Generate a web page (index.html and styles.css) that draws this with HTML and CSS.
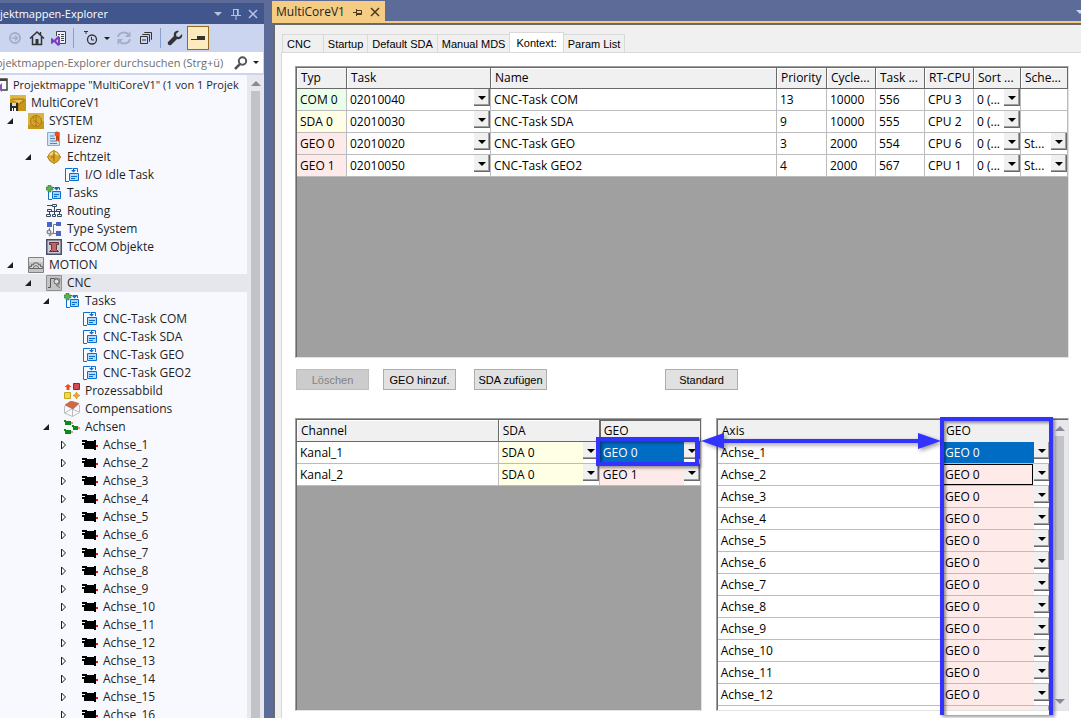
FILE: index.html
```html
<!DOCTYPE html>
<html lang="de">
<head>
  <meta charset="UTF-8">
  <meta name="viewport" content="width=device-width, initial-scale=1">
  <title>MultiCoreV1</title>
  <link rel="stylesheet" href="styles.css">
</head>
<body>
  <!-- icon symbols -->
  <svg class="symbols" aria-hidden="true">
    <symbol id="i-open" viewBox="0 0 8 8"><path d="M7 1v6H1z" fill="#1e1e1e"/></symbol>
    <symbol id="i-closed" viewBox="0 0 8 10"><path d="M1.500 1v8l4-4z" fill="#fff" stroke="#1e1e1e"/></symbol>
    <symbol id="i-solution" viewBox="0 0 16 16"><path d="M3 2h12v11H9" fill="#f8f9ff" stroke="#424242" stroke-width="1.500"/><path d="M3 3h12" stroke="#424242" stroke-width="2"/><path d="M1 9l3 3 6-6v9l-6-5-3 3z" fill="#8a4fc8"/></symbol>
    <symbol id="i-project" viewBox="0 0 16 16"><path d="M0 0h16v16H0z" fill="#c9961c"/><path d="M0 0h16v4H0z" fill="#dfb545"/><path d="M2 4h12v2L8 10v6" fill="none" stroke="#a87c12"/><path d="M3 5h10l-4 3z" fill="#e8c560"/><path d="M0 8h8v8H0z" fill="#2b2b2b"/><path d="M2 8h4v3H2z" fill="#d9d9d9"/><path d="M2 13h1v3H2zM4 13h2v3H4z" fill="#fff"/></symbol>
    <symbol id="i-system" viewBox="0 0 16 16"><path d="M0 0h16v16H0z" fill="#c9961c"/><path d="M0 0h16v8L0 12z" fill="#deb23c"/><circle cx="8" cy="8" r="5.500" fill="#d5a52d" stroke="#a87a14"/><path d="M8 3v10M5 8h3M8 8l3 3M6 4L5 6" stroke="#a87a14" fill="none"/></symbol>
    <symbol id="i-license" viewBox="0 0 16 16"><path d="M1.500 1.500h12v13h-12z" fill="#cfe5f7" stroke="#79afd8"/><path d="M4 5h4M4 7.500h5M4 10h7M4 12.500h7" stroke="#5b87ab"/><circle cx="11" cy="3" r="2.500" fill="#e5521c"/><path d="M10 5h3v6l-1.500-1.500L10 10z" fill="#c8441a"/></symbol>
    <symbol id="i-realtime" viewBox="0 0 16 16"><circle cx="8" cy="8" r="5.700" fill="#dba92b" stroke="#b5841a"/><path d="M7 1h2v2H7zM1 7h2v2H1zM13 7h2v2h-2zM7 13h2v2H7z" fill="#c9961c"/><path d="M4 6c2-3 6-3 8 0" stroke="#f5da87" fill="none" stroke-width="2"/><path d="M8 3v9M5 8h3" stroke="#94690d" fill="none"/></symbol>
    <symbol id="i-task" viewBox="0 0 16 16"><path d="M5 14.500H1.500v-13h7M9 1.500h4.500V5" fill="none" stroke="#0a6fd0"/><path d="M7 3h5L9.500 5.500zM9 1h1v3H9z" fill="#0a6fd0"/><path d="M5.500 6.500h9v7h-9z" fill="#b5daf9" stroke="#0a6fd0"/><path d="M7 9.500h6M7 11.500h4" stroke="#0a6fd0"/></symbol>
    <symbol id="i-tasks" viewBox="0 0 16 16"><path d="M6 14.500H2.500v-12h6M9 2.500h4.500V5" fill="none" stroke="#0a6fd0"/><path d="M8 3h5l-2.500 2.500z" fill="#0a6fd0"/><path d="M6.500 6.500h8v7h-8z" fill="#a9d3f7" stroke="#0a6fd0"/><path d="M8 9.500h5M8 11.500h3" stroke="#0a6fd0"/><path d="M2 0h3v2h2v3H5v2H2V5H0V2h2z" fill="#5fae57" stroke="#397b34" stroke-width=".6"/></symbol>
    <symbol id="i-routing" viewBox="0 0 16 16"><path d="M1 2.500h6M8.500 4v7M3 8.500h12M3.500 6v5M13.500 8v4" stroke="#35495e" fill="none"/><path d="M6.500 1.500h4v2h-4zM1.500 6.500h4v2h-4zM10.500 6.500h4v2h-4zM.500 11.500h4v2h-4zM6.500 11.500h3v2h-3zM11.500 11.500h4v2h-4z" fill="#f8f9ff" stroke="#35495e"/></symbol>
    <symbol id="i-types" viewBox="0 0 16 16"><path d="M1 1h5v5H1zM10 1h5v4h-5zM10 10h5v5h-5z" fill="#4766c4"/><path d="M10 3.500H7.500v9H10M3.500 7v3" stroke="#777" fill="none"/><circle cx="3" cy="11" r="2" fill="#ddd" stroke="#666"/><path d="M3 15l4-3" stroke="#888" stroke-width="1.500"/></symbol>
    <symbol id="i-tccom" viewBox="0 0 16 16"><path d="M.750.750h14.500v14.500H.750z" fill="#c9cbd6" stroke="#4b4f68" stroke-width="1.500"/><path d="M3.500 3.500h9v2h-2v5l2 2h-9l2-2v-5h-2z" fill="#b8686b" stroke="#6d2d32"/></symbol>
    <symbol id="i-motion" viewBox="0 0 16 16"><path d="M.500.500h15v15H.500z" fill="#c4c4c4" stroke="#808080"/><path d="M1 1h14v4H1z" fill="#dedede"/><path d="M1.500 11.500v-2h2v-2l2 .5.500-2h4l.5 2 2-.5v2h2v2zM5.500 11c0-3 5-3 5 0" fill="#d4d4d4" stroke="#666"/></symbol>
    <symbol id="i-cnc" viewBox="0 0 16 16"><path d="M.500.500h15v15H.500z" fill="#c4c4c4" stroke="#909090"/><path d="M2 12.500h2.500v-9h4v5" fill="none" stroke="#555"/><circle cx="10.500" cy="6.500" r="2.500" fill="#ddd" stroke="#666"/><path d="M9 3l5 1-1 6-3 0 4 3" stroke="#777" fill="none"/></symbol>
    <symbol id="i-image" viewBox="0 0 16 16"><path d="M4 1l3.500 3H5.500v3h-3V4H.500z" fill="#ee4a25"/><path d="M9.500.500h6v6h-6z" fill="#d34b55" stroke="#a2202c"/><path d="M.500 9.500h6v6h-6z" fill="#f0d94c" stroke="#c5a61c"/><path d="M12.500 9l1.200 2.300L16 12.500l-2.300 1.200L12.500 16l-1.200-2.300L9 12.500l2.300-1.200z" fill="#f5a51b" stroke="#ca7d0b" stroke-width=".5"/></symbol>
    <symbol id="i-comp" viewBox="0 0 16 16"><path d="M.500 5v7l8 3.500 7-4V4M8.500 8v7M.500 12l7-4 8 3" fill="none" stroke="#bcbcbc"/><path d="M1 4l6-4 8 2.500L9 8z" fill="#cd6b49" stroke="#b45535" stroke-width=".6"/></symbol>
    <symbol id="i-axes" viewBox="0 0 16 16"><path d="M0 1h2v1h5v4H1V3H0zM8 6h2v1h4v4H9V8H8zM0 10h2v1h5v4H1v-3H0z" fill="#0d8a12"/><path d="M7 4h2M14 9h2M7 13h2" stroke="#e22"/></symbol>
    <symbol id="i-axis" viewBox="0 0 16 16"><path d="M0 3h5v1h7V3h2v10h-2v-1H2V8H0V6h3V5H0z" fill="#000"/><path d="M14 8h2v2h-2z" fill="#e11"/></symbol>
    <symbol id="i-pin" viewBox="0 0 10 12"><path d="M2.500 1v6M7 1v6M2 1.500h5M0 7.500h10M5 8v4" fill="none" stroke="currentColor"/><path d="M6 1h1.500v6H6z" fill="currentColor"/></symbol>
    <symbol id="i-x" viewBox="0 0 10 10"><path d="M1 1l8 8M9 1L1 9" stroke="currentColor" stroke-width="1.500"/></symbol>
    <symbol id="i-down" viewBox="0 0 8 4"><path d="M0 0h8L4 4z" fill="currentColor"/></symbol>
  </svg>

  <aside class="explorer">
    <header class="explorer-title">
      <h1>jektmappen-Explorer</h1>
      <button aria-label="Menü"><svg width="8" height="4"><use href="#i-down"/></svg></button>
      <button aria-label="Anheften"><svg width="10" height="12"><use href="#i-pin"/></svg></button>
      <button aria-label="Schließen"><svg width="10" height="10"><use href="#i-x"/></svg></button>
    </header>

    <div class="explorer-tools">
      <button aria-label="Vorwärts"><svg width="16" height="16" viewBox="0 0 16 16"><circle cx="8" cy="8" r="5" fill="none" stroke="#a5adc4" stroke-width="2"/><path d="M5 8h5M8 5.500L10.500 8 8 10.500" fill="none" stroke="#a5adc4" stroke-width="1.500"/></svg></button>
      <button aria-label="Startseite"><svg width="16" height="16" viewBox="0 0 16 16"><path d="M1 8.500L8 2l7 6.500M3.500 7v7.500h9V7M11.500 2v3" fill="none" stroke="#333" stroke-width="1.500"/><path d="M6.500 9h3v5.500h-3z" fill="#333"/></svg></button>
      <button aria-label="Ansicht wechseln"><svg width="16" height="16" viewBox="0 0 16 16"><path d="M5.500 6V1.500h9v12H9" fill="#eef0fa" stroke="#424242"/><path d="M7 4.500h2M10 4.500h3M7 6.500h1M10 6.500h3M10 8.500h3M10 10.500h3" stroke="#424242"/><path d="M0 8.500l1-.5 2 2 4-4 2 1v8l-2 1-4-4-2 2-1-.5z" fill="#7b3fc0"/><path d="M7 9v4l-2-2z" fill="#ccd5f0"/></svg></button>
      <span class="divider"></span>
      <button class="history" aria-label="Verlauf filtern"><svg width="16" height="16" viewBox="0 0 16 16"><circle cx="9" cy="9.500" r="4.500" fill="none" stroke="#333" stroke-width="1.300"/><path d="M8.500 7v3H11M1 1.500h4M3 1v3" fill="none" stroke="#333"/></svg><svg width="6" height="3"><use href="#i-down"/></svg></button>
      <button aria-label="Aktualisieren"><svg width="16" height="16" viewBox="0 0 16 16"><path d="M2 7c1-5 8-6 11-2M14 9c-1 5-8 6-11 2" fill="none" stroke="#a5adc4" stroke-width="2"/><path d="M14.500 1v6H9zM1.500 15V9H7z" fill="#a5adc4"/></svg></button>
      <button aria-label="Alle reduzieren"><svg width="16" height="16" viewBox="0 0 16 16"><path d="M6.500 3V2.500h7v7H13M4.500 5V4.500h7v7H11M2.500 6.500h7v7h-7zM4 10h4" fill="none" stroke="#333"/></svg></button>
      <span class="divider"></span>
      <button aria-label="Eigenschaften"><svg width="16" height="16" viewBox="0 0 16 16"><path d="M15 4l-3 3-2.500-.5L9 4l3-3C8.500 0 6 3 7 6l-6 6c-1 2 1 4 3 3l6-6c3 1 6-1.500 5-5z" fill="#333"/></svg></button>
      <button class="pressed" aria-label="Vorschau"><svg width="16" height="16" viewBox="0 0 16 16"><path d="M1 9.500h7" stroke="#333"/><path d="M7 6h8v4H7z" fill="#333"/></svg></button>
    </div>

    <label class="explorer-search">
      <input type="text" placeholder="ojektmappen-Explorer durchsuchen (Strg+ü)" aria-label="Suche">
      <svg width="14" height="14" viewBox="0 0 14 14"><circle cx="8.500" cy="5" r="3.700" fill="none" stroke="#555" stroke-width="2"/><path d="M6 8l-5 5" stroke="#555" stroke-width="2.500"/></svg>
      <svg class="caret" width="6" height="3"><use href="#i-down"/></svg>
    </label>

    <div class="tree-wrap">
      <ul class="tree">
        <li class="root"><svg class="ico"><use href="#i-solution"/></svg>Projektmappe "MultiCoreV1" (1 von 1 Projek</li>
        <li class="l0"><svg class="ico"><use href="#i-project"/></svg>MultiCoreV1</li>
        <li class="l1"><svg class="tw"><use href="#i-open"/></svg><svg class="ico"><use href="#i-system"/></svg>SYSTEM</li>
        <li class="l2"><span class="tw"></span><svg class="ico"><use href="#i-license"/></svg>Lizenz</li>
        <li class="l2"><svg class="tw"><use href="#i-open"/></svg><svg class="ico"><use href="#i-realtime"/></svg>Echtzeit</li>
        <li class="l3"><span class="tw"></span><svg class="ico"><use href="#i-task"/></svg>I/O Idle Task</li>
        <li class="l2"><span class="tw"></span><svg class="ico"><use href="#i-tasks"/></svg>Tasks</li>
        <li class="l2"><span class="tw"></span><svg class="ico"><use href="#i-routing"/></svg>Routing</li>
        <li class="l2"><span class="tw"></span><svg class="ico"><use href="#i-types"/></svg>Type System</li>
        <li class="l2"><span class="tw"></span><svg class="ico"><use href="#i-tccom"/></svg>TcCOM Objekte</li>
        <li class="l1"><svg class="tw"><use href="#i-open"/></svg><svg class="ico"><use href="#i-motion"/></svg>MOTION</li>
        <li class="l2 selected"><svg class="tw"><use href="#i-open"/></svg><svg class="ico"><use href="#i-cnc"/></svg>CNC</li>
        <li class="l3"><svg class="tw"><use href="#i-open"/></svg><svg class="ico"><use href="#i-tasks"/></svg>Tasks</li>
        <li class="l4"><span class="tw"></span><svg class="ico"><use href="#i-task"/></svg>CNC-Task COM</li>
        <li class="l4"><span class="tw"></span><svg class="ico"><use href="#i-task"/></svg>CNC-Task SDA</li>
        <li class="l4"><span class="tw"></span><svg class="ico"><use href="#i-task"/></svg>CNC-Task GEO</li>
        <li class="l4"><span class="tw"></span><svg class="ico"><use href="#i-task"/></svg>CNC-Task GEO2</li>
        <li class="l3"><span class="tw"></span><svg class="ico"><use href="#i-image"/></svg>Prozessabbild</li>
        <li class="l3"><span class="tw"></span><svg class="ico"><use href="#i-comp"/></svg>Compensations</li>
        <li class="l3"><svg class="tw"><use href="#i-open"/></svg><svg class="ico"><use href="#i-axes"/></svg>Achsen</li>
        <li class="l4"><svg class="tw"><use href="#i-closed"/></svg><svg class="ico"><use href="#i-axis"/></svg>Achse_1</li>
        <li class="l4"><svg class="tw"><use href="#i-closed"/></svg><svg class="ico"><use href="#i-axis"/></svg>Achse_2</li>
        <li class="l4"><svg class="tw"><use href="#i-closed"/></svg><svg class="ico"><use href="#i-axis"/></svg>Achse_3</li>
        <li class="l4"><svg class="tw"><use href="#i-closed"/></svg><svg class="ico"><use href="#i-axis"/></svg>Achse_4</li>
        <li class="l4"><svg class="tw"><use href="#i-closed"/></svg><svg class="ico"><use href="#i-axis"/></svg>Achse_5</li>
        <li class="l4"><svg class="tw"><use href="#i-closed"/></svg><svg class="ico"><use href="#i-axis"/></svg>Achse_6</li>
        <li class="l4"><svg class="tw"><use href="#i-closed"/></svg><svg class="ico"><use href="#i-axis"/></svg>Achse_7</li>
        <li class="l4"><svg class="tw"><use href="#i-closed"/></svg><svg class="ico"><use href="#i-axis"/></svg>Achse_8</li>
        <li class="l4"><svg class="tw"><use href="#i-closed"/></svg><svg class="ico"><use href="#i-axis"/></svg>Achse_9</li>
        <li class="l4"><svg class="tw"><use href="#i-closed"/></svg><svg class="ico"><use href="#i-axis"/></svg>Achse_10</li>
        <li class="l4"><svg class="tw"><use href="#i-closed"/></svg><svg class="ico"><use href="#i-axis"/></svg>Achse_11</li>
        <li class="l4"><svg class="tw"><use href="#i-closed"/></svg><svg class="ico"><use href="#i-axis"/></svg>Achse_12</li>
        <li class="l4"><svg class="tw"><use href="#i-closed"/></svg><svg class="ico"><use href="#i-axis"/></svg>Achse_13</li>
        <li class="l4"><svg class="tw"><use href="#i-closed"/></svg><svg class="ico"><use href="#i-axis"/></svg>Achse_14</li>
        <li class="l4"><svg class="tw"><use href="#i-closed"/></svg><svg class="ico"><use href="#i-axis"/></svg>Achse_15</li>
        <li class="l4"><svg class="tw"><use href="#i-closed"/></svg><svg class="ico"><use href="#i-axis"/></svg>Achse_16</li>
      </ul>
      <div class="scrollbar">
        <i class="up"></i>
        <i class="thumb"></i>
      </div>
    </div>
  </aside>

  <main class="editor">
    <div class="doc-tabs">
      <div class="doc-tab">
        <span>MultiCoreV1</span>
        <button aria-label="Anheften"><svg width="9" height="8" viewBox="0 0 9 8"><path d="M0 4.500h3M3.500 1v7M4 2.500h4.500v4H4M4 5.500h4" fill="none" stroke="currentColor"/></svg></button>
        <button aria-label="Schließen"><svg width="10" height="10"><use href="#i-x"/></svg></button>
      </div>
      <svg class="tab-list" width="8" height="4"><use href="#i-down"/></svg>
    </div>

    <div class="document">
      <nav class="tabs">
        <button class="tab wide">CNC</button>
        <button class="tab">Startup</button>
        <button class="tab">Default SDA</button>
        <button class="tab">Manual MDS</button>
        <button class="tab active">Kontext:</button>
        <button class="tab">Param List</button>
      </nav>

      <section class="page">
        <div class="grid contexts">
          <table>
            <colgroup>
              <col class="w-type"><col class="w-task"><col><col class="w-type"><col class="w-num"><col class="w-num"><col class="w-num"><col class="w-small"><col class="w-small">
            </colgroup>
            <thead>
              <tr><th>Typ</th><th>Task</th><th>Name</th><th>Priority</th><th>Cycle...</th><th>Task ...</th><th>RT-CPU</th><th>Sort ...</th><th>Sche...</th></tr>
            </thead>
            <tbody>
              <tr>
                <td class="com">COM 0</td>
                <td><select aria-label="Task"><option>02010040</option></select></td>
                <td>CNC-Task COM</td><td>13</td><td>10000</td><td>556</td><td>CPU 3</td>
                <td><select aria-label="Sort"><option>0 (...</option></select></td>
                <td></td>
              </tr>
              <tr>
                <td class="sda">SDA 0</td>
                <td><select aria-label="Task"><option>02010030</option></select></td>
                <td>CNC-Task SDA</td><td>9</td><td>10000</td><td>555</td><td>CPU 2</td>
                <td><select aria-label="Sort"><option>0 (...</option></select></td>
                <td></td>
              </tr>
              <tr>
                <td class="geo">GEO 0</td>
                <td><select aria-label="Task"><option>02010020</option></select></td>
                <td>CNC-Task GEO</td><td>3</td><td>2000</td><td>554</td><td>CPU 6</td>
                <td><select aria-label="Sort"><option>0 (...</option></select></td>
                <td><select aria-label="Schedule"><option>St...</option></select></td>
              </tr>
              <tr>
                <td class="geo">GEO 1</td>
                <td><select aria-label="Task"><option>02010050</option></select></td>
                <td>CNC-Task GEO2</td><td>4</td><td>2000</td><td>567</td><td>CPU 1</td>
                <td><select aria-label="Sort"><option>0 (...</option></select></td>
                <td><select aria-label="Schedule"><option>St...</option></select></td>
              </tr>
            </tbody>
          </table>
        </div>

        <div class="actions">
          <button disabled>Löschen</button>
          <button>GEO hinzuf.</button>
          <button>SDA zufügen</button>
          <button class="standard">Standard</button>
        </div>

        <div class="assignments">
          <div class="grid channels">
            <table>
              <colgroup><col><col class="w-assign"><col class="w-assign"></colgroup>
              <thead>
                <tr><th>Channel</th><th>SDA</th><th class="down">GEO</th></tr>
              </thead>
              <tbody>
                <tr>
                  <td>Kanal_1</td>
                  <td class="sda"><select aria-label="SDA"><option>SDA 0</option></select></td>
                  <td class="geo current"><select aria-label="GEO"><option>GEO 0</option></select></td>
                </tr>
                <tr>
                  <td>Kanal_2</td>
                  <td class="sda"><select aria-label="SDA"><option>SDA 0</option></select></td>
                  <td class="geo"><select aria-label="GEO"><option>GEO 1</option></select></td>
                </tr>
              </tbody>
            </table>
            <div class="mark mark-cell"></div>
          </div>

          <div class="grid axes">
            <div class="rows">
              <table>
                <colgroup><col><col class="w-axis-geo"></colgroup>
                <thead>
                  <tr><th>Axis</th><th>GEO</th></tr>
                </thead>
                <tbody>
                  <tr><td>Achse_1</td><td class="geo current"><select aria-label="GEO"><option>GEO 0</option></select></td></tr>
                  <tr><td>Achse_2</td><td class="geo focus"><select aria-label="GEO"><option>GEO 0</option></select></td></tr>
                  <tr><td>Achse_3</td><td class="geo"><select aria-label="GEO"><option>GEO 0</option></select></td></tr>
                  <tr><td>Achse_4</td><td class="geo"><select aria-label="GEO"><option>GEO 0</option></select></td></tr>
                  <tr><td>Achse_5</td><td class="geo"><select aria-label="GEO"><option>GEO 0</option></select></td></tr>
                  <tr><td>Achse_6</td><td class="geo"><select aria-label="GEO"><option>GEO 0</option></select></td></tr>
                  <tr><td>Achse_7</td><td class="geo"><select aria-label="GEO"><option>GEO 0</option></select></td></tr>
                  <tr><td>Achse_8</td><td class="geo"><select aria-label="GEO"><option>GEO 0</option></select></td></tr>
                  <tr><td>Achse_9</td><td class="geo"><select aria-label="GEO"><option>GEO 0</option></select></td></tr>
                  <tr><td>Achse_10</td><td class="geo"><select aria-label="GEO"><option>GEO 0</option></select></td></tr>
                  <tr><td>Achse_11</td><td class="geo"><select aria-label="GEO"><option>GEO 0</option></select></td></tr>
                  <tr><td>Achse_12</td><td class="geo"><select aria-label="GEO"><option>GEO 0</option></select></td></tr>
                  <tr><td></td><td class="geo"><select aria-label="GEO"></select></td></tr>
                </tbody>
              </table>
            </div>
            <div class="scrollbar">
              <i class="up"></i>
              <i class="thumb"></i>
              <i class="dn"></i>
            </div>
            <div class="mark mark-column"></div>
            <div class="mark-arrow"></div>
          </div>
        </div>
      </section>
    </div>
  </main>
</body>
</html>
```

FILE: styles.css
```css
* {
  box-sizing: border-box;
}

body {
  margin: 0;
  height: 100vh;
  display: flex;
  gap: 8px;
  overflow: hidden;
  background: #5d6b99;
  color: #1e1e1e;
  font-family: "Open Sans", "Noto Sans", sans-serif;
  font-size: 12px;
  line-height: 18px;
}

button, input, select {
  font: inherit;
  color: inherit;
  padding: 0;
  margin: 0;
  border: 0;
  background: none;
}

svg {
  display: block;
  flex: none;
}

.symbols {
  position: absolute;
  width: 0;
  height: 0;
}

/* solution explorer */
.explorer {
  flex: none;
  width: 264px;
  margin-top: 3px;
  display: flex;
  flex-direction: column;
  background: #ccd5f0;
}

.explorer-title {
  display: flex;
  align-items: center;
  gap: 7px;
  height: 21px;
  padding-right: 6px;
  background: #40568d;
  color: #b7c2e0;
}

.explorer-title h1 {
  flex: 1;
  margin: 0;
  font-size: 11px;
  font-weight: normal;
  color: #fff;
}

.explorer-title button:first-of-type {
  margin-right: 2px;
}

.explorer-tools {
  display: flex;
  align-items: center;
  gap: 6px;
  height: 28px;
  padding-left: 7px;
}

.explorer-tools .divider {
  width: 1px;
  height: 20px;
  background: #8a9fcb;
}

.explorer-tools .history {
  display: flex;
  align-items: center;
  gap: 5px;
  margin-left: 3px;
}

.explorer-tools .pressed {
  height: 24px;
  width: 22px;
  margin-left: -2px;
  padding: 2px;
  border: 1px solid #926a1c;
  background: #fdeabf;
}

.explorer-search {
  display: flex;
  align-items: center;
  height: 21px;
  margin-right: 1px;
  padding-right: 4px;
  background: #fff;
}

.explorer-search input {
  flex: 1;
  min-width: 0;
  margin-left: -4px;
  margin-right: 6px;
  font-size: 11px;
}

.explorer-search input::placeholder {
  color: #6d6d6d;
}

.explorer-search .caret {
  margin-left: 5px;
}

.tree-wrap {
  flex: 1;
  min-height: 0;
  display: flex;
  margin-top: 2px;
}

.tree {
  flex: 1;
  min-width: 0;
  margin: 0;
  padding: 1px 0 0;
  list-style: none;
  overflow: hidden;
  background: #f8f9ff;
}

.tree li {
  display: flex;
  align-items: center;
  height: 18px;
  white-space: nowrap;
}

.tree .ico {
  width: 16px;
  height: 16px;
  margin-right: 5px;
}

.tree .tw {
  flex: none;
  width: 8px;
  height: 10px;
  margin-right: 14px;
}

.tree .root {
  margin-left: -8px;
  font-size: 11px;
}

.tree .l0 { padding-left: 10px; }
.tree .l1 { padding-left: 6px; }
.tree .l2 { padding-left: 24px; }
.tree .l3 { padding-left: 42px; }
.tree .l4 { padding-left: 60px; }

.tree .selected {
  background: #e6e7ed;
}

.scrollbar {
  flex: none;
  display: flex;
  flex-direction: column;
  align-items: center;
  width: 17px;
  padding: 6px 0;
  background: #e8e8ec;
}

.scrollbar .up {
  border: 5px solid transparent;
  border-top: 0;
  border-bottom-color: #868999;
}

.scrollbar .dn {
  border: 5px solid transparent;
  border-bottom: 0;
  border-top-color: #868999;
  margin-top: auto;
}

.scrollbar .thumb {
  width: 9px;
  margin-top: 5px;
  background: #c2c3c9;
}

.tree-wrap .scrollbar {
  padding-bottom: 0;
}

.tree-wrap .thumb {
  flex: 1;
}

/* document area */
.editor {
  flex: 1;
  min-width: 0;
  padding-top: 2px;
  display: flex;
  flex-direction: column;
}

.doc-tabs {
  display: flex;
  justify-content: space-between;
  align-items: center;
  height: 21px;
  border-bottom: 2px solid #f5cc84;
}

.doc-tab {
  display: flex;
  align-items: center;
  gap: 8px;
  height: 21px;
  padding: 0 5px 0 4px;
  background: #f5cc84;
  color: #4a3a1a;
}

.doc-tab span {
  color: #1e1e1e;
}

.tab-list {
  color: #ccd5f0;
  margin-right: -3px;
}

.document {
  flex: 1;
  min-height: 0;
  display: flex;
  flex-direction: column;
  margin-left: 1px;
  padding: 7px 0 0 6px;
  border-top: 2px solid #696969;
  border-left: 2px solid #696969;
  background: #f0f0f0;
}

.tabs {
  display: flex;
  align-items: flex-end;
  height: 20px;
  padding-left: 1px;
  font-family: "Liberation Sans", Arial, sans-serif;
  font-size: 11px;
  line-height: 18px;
}

.tab {
  height: 18px;
  padding: 0 4px;
  border: 1px solid #d9d9d9;
  border-bottom: 0;
  margin-right: -1px;
  background: #f0f0f0;
  color: #000;
}

.tab.wide {
  padding-right: 12px;
}

.tab.active {
  height: 21px;
  padding: 0 6px;
  margin-bottom: -1px;
  background: #fff;
}

.page {
  flex: 1;
  min-height: 0;
  display: flex;
  flex-direction: column;
  padding: 13px 12px 7px 13px;
  border: 1px solid #d9d9d9;
  border-right: 0;
  border-bottom: 0;
  background: #fff;
  color: #000;
}

/* data grids */
.grid {
  position: relative;
  border: 1px solid #e3e3e3;
  border-top-color: #a0a0a0;
  border-left-color: #a0a0a0;
  background: #a0a0a0;
  box-shadow: inset 1px 1px #696969;
  padding: 1px 0 0 1px;
}

.grid table {
  width: 100%;
  table-layout: fixed;
  border-collapse: separate;
  border-spacing: 0;
}

.grid th {
  height: 21px;
  padding: 0 0 0 4px;
  border-right: 1px solid #696969;
  border-bottom: 1px solid #696969;
  box-shadow: inset 1px 1px #fff;
  background: #f0f0f0;
  font-weight: normal;
  text-align: left;
  white-space: nowrap;
}

.grid td {
  height: 22px;
  padding: 0 0 0 3px;
  border-right: 1px solid #bcbcbc;
  border-bottom: 1px solid #bcbcbc;
  background: #fff;
  white-space: nowrap;
}

.grid select {
  appearance: none;
  display: block;
  width: 100%;
  height: 21px;
  padding-right: 17px;
  border-radius: 0;
  background: url("data:image/svg+xml,%3Csvg xmlns='http://www.w3.org/2000/svg' width='16' height='21'%3E%3Cpath d='M0 0h16v21H0z' fill='%23fff'/%3E%3Cpath d='M0 0h16v17H0z' fill='%23696969'/%3E%3Cpath d='M0 0h15v16H0z' fill='%23a0a0a0'/%3E%3Cpath d='M0 0h14v15H0z' fill='%23f0f0f0'/%3E%3Cpath d='M4 7h8l-4 4z'/%3E%3C/svg%3E") right top no-repeat;
}

.grid .com { background: #eaffea; }
.grid .sda { background: #ffffe6; }
.grid .geo { background: #ffeaea; }

.grid .current {
  background: #006cc4;
  color: #fff;
}

.w-type { width: 50px; }
.w-task { width: 144px; }
.w-num { width: 49px; }
.w-small { width: 47px; }
.w-assign { width: 101px; }
.w-axis-geo { width: 109px; }

.contexts {
  flex: none;
  height: 292px;
}

.actions {
  display: flex;
  margin: 11px 0 28px 1px;
  font-family: "Liberation Sans", Arial, sans-serif;
  font-size: 11px;
}

.actions button {
  width: 73px;
  height: 21px;
  margin-right: 14px;
  border: 1px solid #adadad;
  background: #e1e1e1;
}

.actions button:nth-child(2) {
  margin-right: 18px;
}

.actions button:disabled {
  border-color: #bfbfbf;
  background: #ccc;
  color: #838383;
}

.actions .standard {
  margin-left: 104px;
}

.assignments {
  flex: 1;
  min-height: 0;
  display: flex;
  gap: 14px;
}

.channels {
  flex: 407;
}

.channels th {
  height: 22px;
}

.channels .down {
  box-shadow: inset 1px 1px #696969;
}

.axes {
  flex: 353;
  display: flex;
}

.axes .rows {
  flex: 1;
  overflow: hidden;
  background: #fff;
}

.axes th {
  height: 22px;
  border: 0;
  box-shadow: none;
}

.axes .focus {
  position: relative;
}

/* cell cursor, leaves the drop-down button free */
.axes .focus::after {
  content: "";
  position: absolute;
  inset: 0 17px 0 0;
  border: 1px solid #000;
  pointer-events: none;
}

.axes .thumb {
  height: 124px;
}

/* highlight marks drawn over the grids */
.mark {
  position: absolute;
  border: 4px solid #3333ff;
  box-shadow: 2px 2px 3px rgba(0, 0, 0, .4), inset 2px 2px 3px rgba(0, 0, 0, .4);
  pointer-events: none;
}

.mark-cell {
  top: 18px;
  right: 2px;
  width: 103px;
  height: 29px;
}

.mark-column {
  top: -2px;
  right: 15px;
  bottom: -5px;
  width: 113px;
  border-bottom: 0;
}

.mark-arrow {
  position: absolute;
  top: 20px;
  left: 7px;
  right: 150px;
  height: 4px;
  background: #3333ff;
  filter: drop-shadow(2px 2px 2px rgba(0, 0, 0, .4));
  pointer-events: none;
}

.mark-arrow::before,
.mark-arrow::after {
  content: "";
  position: absolute;
  top: -6px;
  border: 8px solid transparent;
}

.mark-arrow::before {
  right: 100%;
  border-left: 0;
  border-right: 23px solid #3333ff;
}

.mark-arrow::after {
  left: 100%;
  border-right: 0;
  border-left: 23px solid #3333ff;
}
```
